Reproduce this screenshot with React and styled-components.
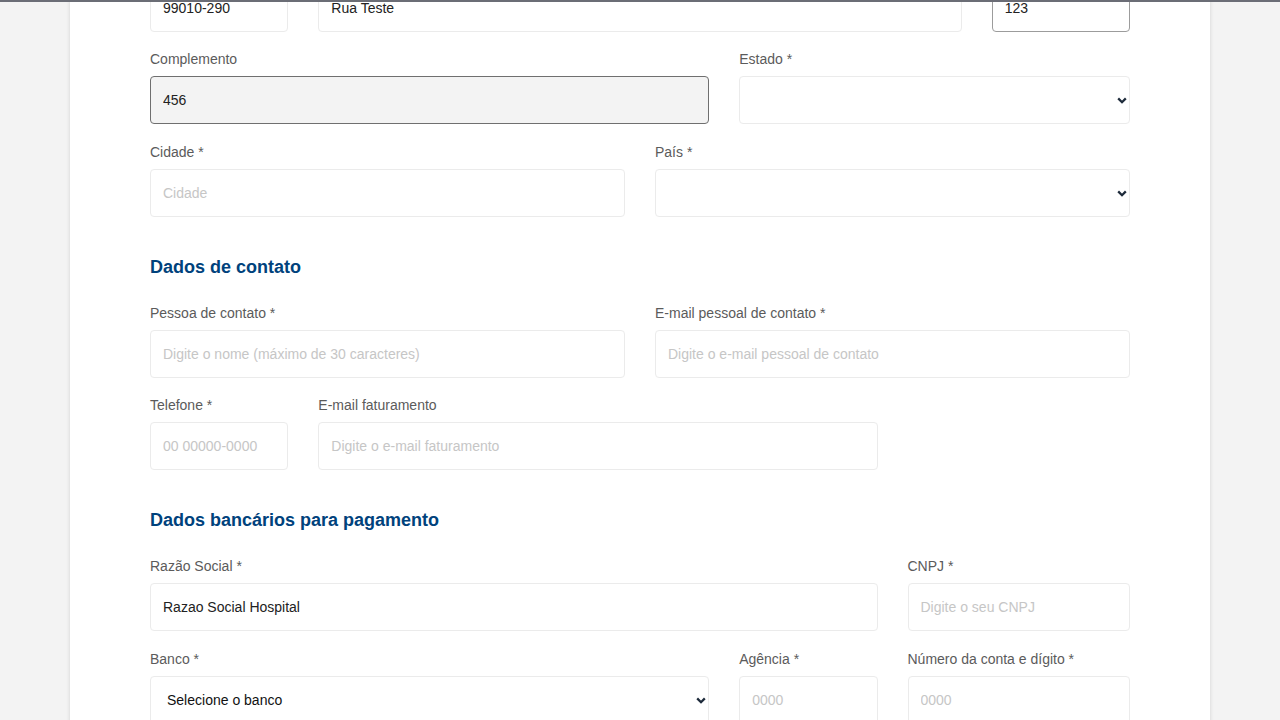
import React from 'react';
import styled, { createGlobalStyle } from 'styled-components';

const Global = createGlobalStyle`
  html, body { margin: 0; padding: 0; background: #f3f3f3; }
  body { font-family: "Liberation Sans", Arial, sans-serif; overflow: hidden; }
  *, *::before, *::after { box-sizing: border-box; }
`;

const TopBar = styled.div`
  position: fixed;
  top: 0;
  left: 0;
  right: 0;
  height: 2px;
  background: #6b6d76;
  z-index: 10;
`;

const Page = styled.div`
  height: 100vh;
  overflow: hidden;
  padding: 0 70px;
  background: #f3f3f3;
`;

const Card = styled.main`
  margin-top: -44.5px;
  background: #fff;
  box-shadow: 0 0 4px rgba(0, 0, 0, 0.14);
  padding: 0 80px 80px;
  min-height: calc(100vh + 45px);
`;

const Form = styled.form`
  display: flex;
  flex-direction: column;
`;

const SectionTitle = styled.h2`
  margin: 38px 0 23px;
  font-size: 18px;
  line-height: 24px;
  font-weight: 700;
  color: #00427c;
`;

const Grid = styled.div`
  display: grid;
  grid-template-columns: repeat(12, minmax(0, 1fr));
  column-gap: 30px;
  row-gap: 16.5px;
`;

const Field = styled.div`
  grid-column: ${(p) => (p.$start ? `${p.$start} / span ${p.$span}` : `span ${p.$span}`)};
  display: flex;
  flex-direction: column;
`;

const Label = styled.label`
  font-size: 14px;
  line-height: 22px;
  color: #5b5b5b;
  margin-bottom: 6px;
`;

const tones = {
  normal: { bg: '#ffffff', border: '#ebebeb' },
  disabled: { bg: '#f3f3f3', border: '#6f6f6f' },
  active: { bg: '#ffffff', border: '#9c9c9c' },
};

const Input = styled.input`
  height: 48px;
  width: 100%;
  border: 1px solid ${(p) => tones[p.$tone || 'normal'].border};
  background: ${(p) => tones[p.$tone || 'normal'].bg};
  border-radius: 4px;
  padding: 0 12px;
  font-family: "Liberation Sans", Arial, sans-serif;
  font-size: 14px;
  color: #222;
  outline: none;
  &::placeholder { color: #c6c6c6; opacity: 1; }
`;

const SelectWrap = styled.div`
  position: relative;
  height: 48px;
`;

const Select = styled.select`
  appearance: none;
  -webkit-appearance: none;
  height: 48px;
  width: 100%;
  border: 1px solid #ebebeb;
  border-radius: 4px;
  background: #fff;
  padding: 0 24px 0 16px;
  font-family: "Liberation Sans", Arial, sans-serif;
  font-size: 14px;
  color: #111;
  outline: none;
`;

const Chevron = styled.svg`
  position: absolute;
  right: 3px;
  top: 50%;
  width: 10px;
  height: 7px;
  margin-top: -3px;
  pointer-events: none;
`;

function SelectBox({ value }) {
  return (
    <SelectWrap>
      <Select defaultValue={value || ''}>
        <option value={value || ''}>{value || ''}</option>
      </Select>
      <Chevron viewBox="0 0 10 7" aria-hidden="true">
        <path d="M1.2 1.4 L5 5.2 L8.8 1.4" fill="none" stroke="#1e2b3b" strokeWidth="2.3" strokeLinecap="butt" strokeLinejoin="miter" />
      </Chevron>
    </SelectWrap>
  );
}

function TextField({ label, span, start, value, placeholder, tone }) {
  return (
    <Field $span={span} $start={start}>
      <Label>{label}</Label>
      <Input $tone={tone} defaultValue={value} placeholder={placeholder} readOnly={tone === 'disabled'} />
    </Field>
  );
}

function SelectField({ label, span, start, value }) {
  return (
    <Field $span={span} $start={start}>
      <Label>{label}</Label>
      <SelectBox value={value} />
    </Field>
  );
}

export default function App() {
  return (
    <>
      <Global />
      <TopBar />
      <Page>
        <Card>
          <Form onSubmit={(e) => e.preventDefault()}>
            <Grid>
              <TextField label="CEP *" span={2} value="99010-290" />
              <TextField label="Endereço *" span={8} value="Rua Teste" />
              <TextField label="Número *" span={2} value="123" tone="active" />
              <TextField label="Complemento" span={7} value="456" tone="disabled" />
              <SelectField label="Estado *" span={5} />
              <TextField label="Cidade *" span={6} placeholder="Cidade" />
              <SelectField label="País *" span={6} />
            </Grid>

            <SectionTitle>Dados de contato</SectionTitle>
            <Grid>
              <TextField label="Pessoa de contato *" span={6} placeholder="Digite o nome (máximo de 30 caracteres)" />
              <TextField label="E-mail pessoal de contato *" span={6} placeholder="Digite o e-mail pessoal de contato" />
              <TextField label="Telefone *" span={2} placeholder="00 00000-0000" />
              <TextField label="E-mail faturamento" span={7} placeholder="Digite o e-mail faturamento" />
            </Grid>

            <SectionTitle>Dados bancários para pagamento</SectionTitle>
            <Grid>
              <TextField label="Razão Social *" span={9} value="Razao Social Hospital" />
              <TextField label="CNPJ *" span={3} placeholder="Digite o seu CNPJ" />
              <SelectField label="Banco *" span={7} value="Selecione o banco" />
              <TextField label="Agência *" span={2} placeholder="0000" />
              <TextField label="Número da conta e dígito *" span={3} placeholder="0000" />
            </Grid>
          </Form>
        </Card>
      </Page>
    </>
  );
}
